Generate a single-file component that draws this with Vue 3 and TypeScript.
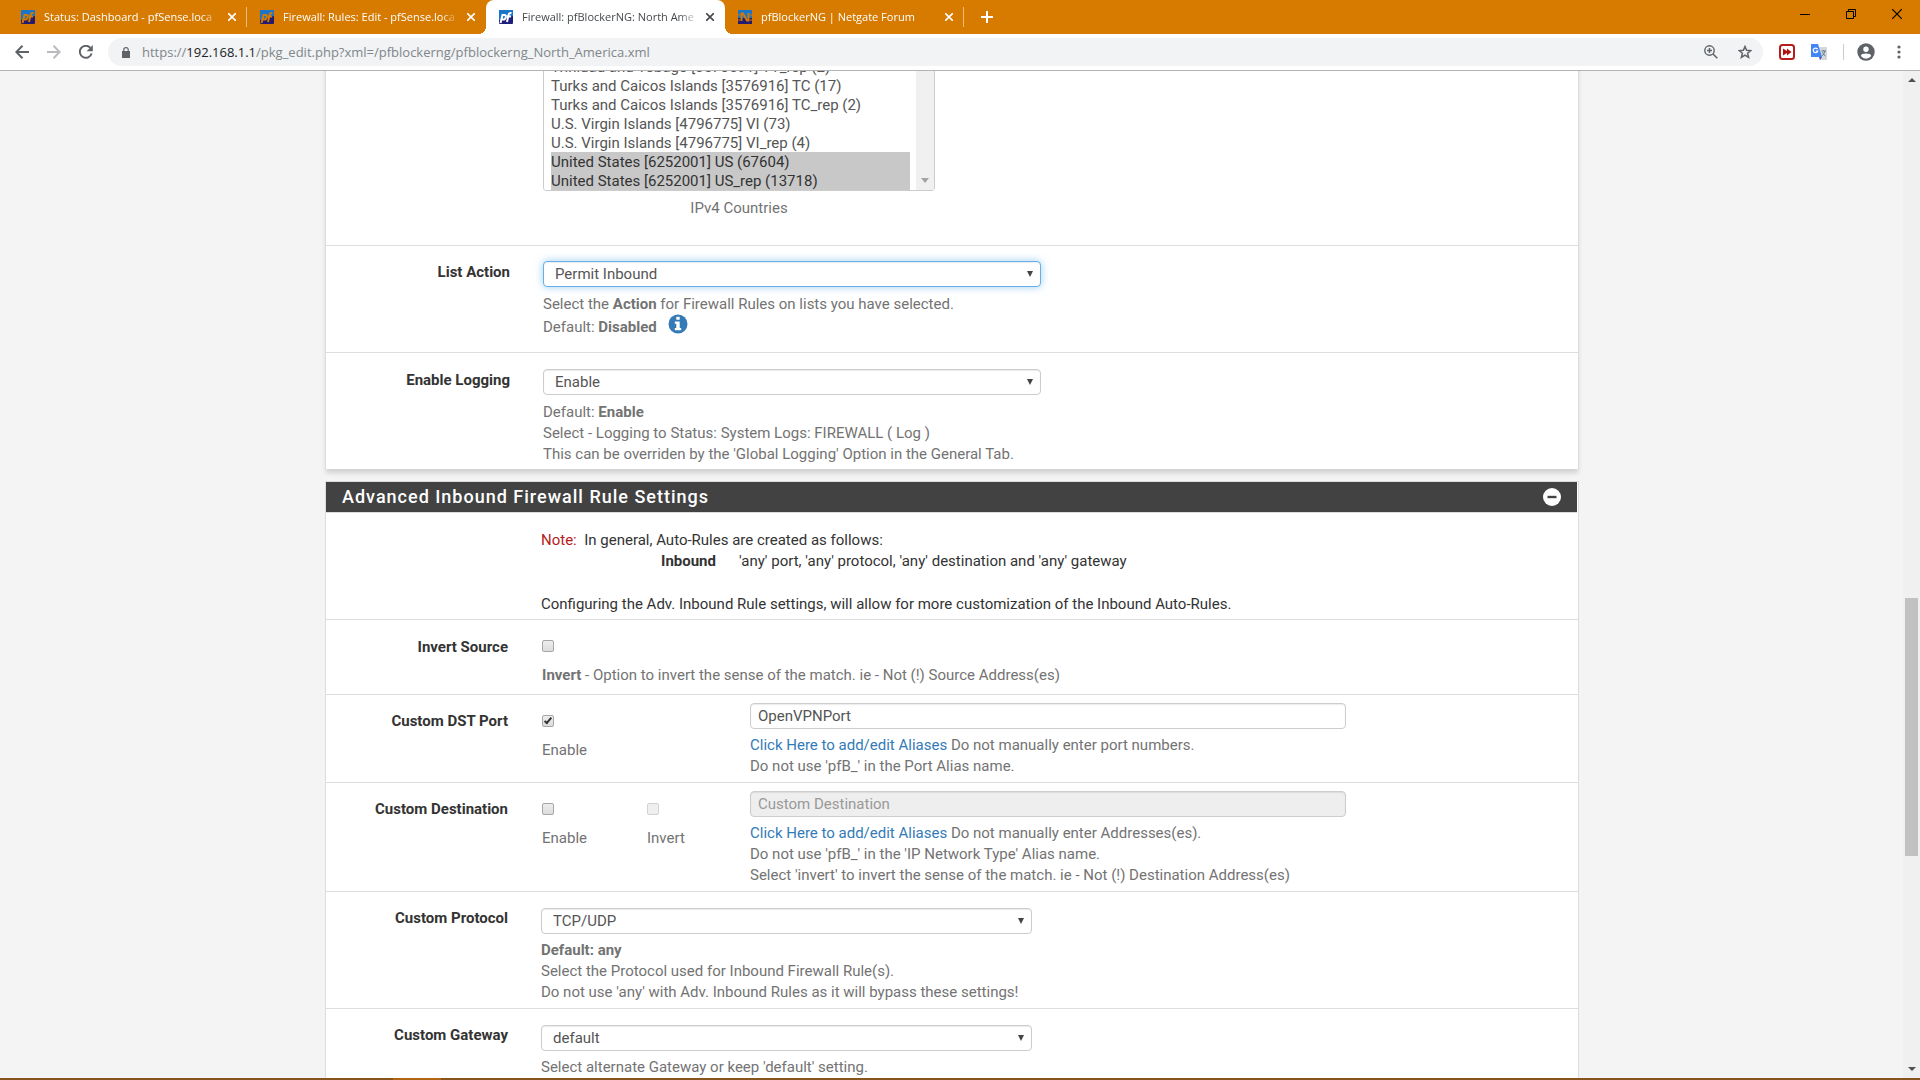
<script setup lang="ts">
import { ref } from 'vue'

interface Tab {
  title: string
  icon: 'pf' | 'netgate'
  active?: boolean
}

const tabs: Tab[] = [
  { title: 'Status: Dashboard - pfSense.loca', icon: 'pf' },
  { title: 'Firewall: Rules: Edit - pfSense.loca', icon: 'pf' },
  { title: 'Firewall: pfBlockerNG: North Ame', icon: 'pf', active: true },
  { title: 'pfBlockerNG | Netgate Forum', icon: 'netgate' },
]

const countries: string[] = [
  'Trinidad and Tobago [3573591] TT_rep (2)',
  'Turks and Caicos Islands [3576916] TC (17)',
  'Turks and Caicos Islands [3576916] TC_rep (2)',
  'U.S. Virgin Islands [4796775] VI (73)',
  'U.S. Virgin Islands [4796775] VI_rep (4)',
  'United States [6252001] US (67604)',
  'United States [6252001] US_rep (13718)',
]

const selectedCountries = ref<string[]>(countries.slice(5))
const listAction = ref('Permit Inbound')
const logging = ref('Enable')
const invertSource = ref(false)
const dstPortOn = ref(true)
const dstPort = ref('OpenVPNPort')
const destinationOn = ref(false)
const destinationInvert = ref(false)
const destination = ref('')
const protocol = ref('TCP/UDP')
const gateway = ref('default')
</script>

<template>
  <div class="window">
    <header class="tab-strip">
      <div class="tabs">
        <div v-for="tab in tabs" :key="tab.title" class="tab" :class="{ active: tab.active }">
          <svg v-if="tab.icon === 'pf'" class="favicon" viewBox="0 0 14 14" aria-hidden="true">
            <rect width="14" height="14" rx="1" :fill="tab.active ? '#1d1d7c' : '#241a70'" />
            <path d="M0 0H14V6L0 10Z" fill="#1b75c9" />
            <g fill="none" :stroke="tab.active ? '#fff' : '#d67a00'" stroke-width="2">
              <path d="M1.500 13L3.500 5H5.500Q7.300 5 6.800 7.300Q6.300 9.600 4.500 9.600H3" />
              <path d="M8 12L9.700 4.500Q10.200 2.600 12.500 3M8 6.500H12" />
            </g>
          </svg>
          <svg v-else class="favicon" viewBox="0 0 14 14" aria-hidden="true">
            <path d="M0 0H14V8H0Z" fill="#1b75c9" />
            <path d="M0 8H14V14H0Z" fill="#241a70" />
            <path d="M3.500 11V3.500H5L9 10.500H10.500V3" fill="none" stroke="#d67a00" stroke-width="2" />
            <path d="M0 5H2M12 5H14M0 10H2M12 10H14" stroke="#d67a00" />
          </svg>
          <span class="tab-title">{{ tab.title }}</span>
          <button class="tab-close" type="button" aria-label="Close tab">
            <svg viewBox="0 0 8 8" width="8" height="8"><path d="M0 0L8 8M8 0L0 8" stroke="currentColor" stroke-width="1.600" /></svg>
          </button>
        </div>
        <button class="new-tab" type="button" aria-label="New tab">
          <svg viewBox="0 0 12 12" width="12" height="12"><path d="M6 0V12M0 6H12" stroke="#fff" stroke-width="2" /></svg>
        </button>
      </div>
      <div class="caption-buttons">
        <button type="button" aria-label="Minimize">
          <svg viewBox="0 0 10 10" width="10" height="10"><path d="M0 5.500H10" stroke="#000" /></svg>
        </button>
        <button type="button" aria-label="Restore">
          <svg viewBox="0 0 10 10" width="10" height="10"><path d="M.5 2.500H7.500V9.500H.5ZM2.500 2.500V.5H9.500V7.500H7.500" fill="none" stroke="#000" /></svg>
        </button>
        <button type="button" aria-label="Close">
          <svg viewBox="0 0 10 10" width="10" height="10"><path d="M0 0L10 10M10 0L0 10" stroke="#000" stroke-width="1.200" /></svg>
        </button>
      </div>
    </header>

    <nav class="toolbar">
      <button class="nav-button" type="button" aria-label="Back">
        <svg viewBox="0 0 14 14" width="14" height="14"><path d="M14 7H1.500M7.500 .8L1.300 7L7.500 13.200" fill="none" stroke="#5f6368" stroke-width="2" /></svg>
      </button>
      <button class="nav-button" type="button" aria-label="Forward">
        <svg viewBox="0 0 14 14" width="14" height="14"><path d="M0 7H12.500M6.500 .8L12.700 7L6.500 13.200" fill="none" stroke="#b9bbbe" stroke-width="2" /></svg>
      </button>
      <button class="nav-button" type="button" aria-label="Reload">
        <svg viewBox="0 0 14 14" width="14" height="14">
          <path d="M12.600 8.500A6 6 0 1 1 11.300 2.800" fill="none" stroke="#5f6368" stroke-width="2" />
          <path d="M13.800 0V6.200H7.600Z" fill="#5f6368" />
        </svg>
      </button>
      <div class="omnibox">
        <svg viewBox="0 0 8 11" width="8" height="11" aria-hidden="true">
          <path d="M0 4H8V11H0Z" fill="#5f6368" />
          <path d="M1.800 4.500V2.600A2.200 2 0 0 1 6.200 2.600V4.500" fill="none" stroke="#5f6368" stroke-width="1.200" />
        </svg>
        <span class="url">https://<b>192.168.1.1</b>/pkg_edit.php?xml=/pfblockerng/pfblockerng_North_America.xml</span>
        <button type="button" aria-label="Zoom">
          <svg viewBox="0 0 14 14" width="14" height="14"><path d="M9 9L13.300 13.300M5.500 3V8M3 5.500H8" stroke="#5f6368" stroke-width="1.500" /><circle cx="5.500" cy="5.500" r="4.700" fill="none" stroke="#5f6368" stroke-width="1.400" /></svg>
        </button>
        <button type="button" aria-label="Bookmark this page">
          <svg viewBox="0 0 14 14" width="14" height="14"><path d="M7 1.500L8.600 5.300L12.800 5.600L9.600 8.300L10.600 12.400L7 10.200L3.400 12.400L4.400 8.300L1.200 5.600L5.400 5.300Z" fill="none" stroke="#5f6368" stroke-width="1.500" /></svg>
        </button>
      </div>
      <div class="extensions">
        <button type="button" aria-label="Fast forward extension">
          <svg viewBox="0 0 16 16" width="16" height="16"><rect x="1" y="1" width="14" height="14" rx="2.500" fill="#fff" stroke="#b81d1d" stroke-width="2" /><path d="M4 4.500L8 7V4.500L12.500 8L8 11.500V9L4 11.500Z" fill="#b01212" /></svg>
        </button>
        <button type="button" aria-label="Translate">
          <svg viewBox="0 0 16 16" width="16" height="16"><path d="M7 3H16V16H9Z" fill="#d5d7da" /><path d="M0 0H7L11 13H0Z" fill="#4285f4" /><path d="M8 13H11L9 16Z" fill="#3a53c5" /><path d="M6.600 5.200A2.300 2.300 0 1 0 6.800 7H4.800" fill="none" stroke="#fff" stroke-width="1.200" /><path d="M10.500 7H15M12.700 6V7M14 7Q13 11 10.800 12M11.500 8.500Q12.500 11 14.500 12" fill="none" stroke="#5f7f86" /></svg>
        </button>
        <span class="divider"></span>
        <button type="button" aria-label="Profile">
          <svg viewBox="0 0 18 18" width="18" height="18"><circle cx="9" cy="9" r="8.700" fill="#5f6368" /><circle cx="9" cy="6.300" r="2.700" fill="#fff" /><path d="M3.800 13Q4.500 10.600 9 10.600T14.200 13Q12 15.700 9 15.700T3.800 13Z" fill="#fff" /></svg>
        </button>
        <button type="button" aria-label="Menu">
          <svg viewBox="0 0 4 14" width="4" height="14"><g fill="#5f6368"><circle cx="2" cy="2" r="1.600" /><circle cx="2" cy="7" r="1.600" /><circle cx="2" cy="12" r="1.600" /></g></svg>
        </button>
      </div>
    </nav>

    <div class="viewport">
      <main class="page">
        <div class="container">
          <section class="panel basic">
            <div class="row countries">
              <div class="label"></div>
              <div class="field">
                <div class="listbox">
                  <select id="countries" v-model="selectedCountries" multiple :size="countries.length">
                    <option v-for="c in countries" :key="c" :value="c">{{ c }}</option>
                  </select>
                  <div class="list-track">
                    <svg viewBox="0 0 8 5" width="8" height="5" aria-hidden="true"><path d="M0 0H8L4 5Z" fill="#a3a3a3" /></svg>
                  </div>
                </div>
                <label class="list-caption" for="countries">IPv4 Countries</label>
              </div>
            </div>

            <div class="row action">
              <label class="label" for="action">List Action</label>
              <div class="field">
                <div class="select focused">
                  <select id="action" v-model="listAction">
                    <option>Disabled</option>
                    <option>Permit Inbound</option>
                  </select>
                </div>
                <p class="help">Select the <b>Action</b> for Firewall Rules on lists you have selected.</p>
                <p class="help with-icon">
                  <span>Default: <b>Disabled</b></span>
                  <svg viewBox="0 0 20 20" width="20" height="20" aria-hidden="true"><circle cx="10" cy="10" r="9.500" fill="#337ab7" /><path d="M8.300 2.800H11.700V5.800H8.300ZM6.800 7.500H11.700V14H13.200V16.300H6.800V14H8.300V9.800H6.800Z" fill="#fff" /></svg>
                </p>
              </div>
            </div>

            <div class="row logging">
              <label class="label" for="logging">Enable Logging</label>
              <div class="field">
                <div class="select">
                  <select id="logging" v-model="logging">
                    <option>Enable</option>
                    <option>Disable</option>
                  </select>
                </div>
                <p class="help">Default: <b>Enable</b><br />Select - Logging to Status: System Logs: FIREWALL ( Log )<br />This can be overriden by the 'Global Logging' Option in the General Tab.</p>
              </div>
            </div>
          </section>

          <section class="panel advanced">
            <div class="panel-heading">
              <h2>Advanced Inbound Firewall Rule Settings</h2>
              <button type="button" aria-label="Collapse section">
                <svg viewBox="0 0 18 18" width="18" height="18"><circle cx="9" cy="9" r="9" fill="#fff" /><path d="M4.500 9H13.500" stroke="#424242" stroke-width="2.400" /></svg>
              </button>
            </div>

            <div class="row note">
              <div class="label"></div>
              <div class="field">
                <p><span class="danger">Note:</span>&nbsp; In general, Auto-Rules are created as follows:</p>
                <dl>
                  <dt>Inbound</dt>
                  <dd>'any' port, 'any' protocol, 'any' destination and 'any' gateway</dd>
                </dl>
                <p>Configuring the Adv. Inbound Rule settings, will allow for more customization of the Inbound Auto-Rules.</p>
              </div>
            </div>

            <div class="row invert">
              <label class="label" for="invert-source">Invert Source</label>
              <div class="field">
                <div class="check">
                  <input id="invert-source" v-model="invertSource" type="checkbox" />
                  <p class="help"><b>Invert</b> - Option to invert the sense of the match. ie - Not (!) Source Address(es)</p>
                </div>
              </div>
            </div>

            <div class="row port">
              <label class="label" for="port">Custom DST Port</label>
              <div class="field split">
                <div class="check">
                  <input id="port-on" v-model="dstPortOn" type="checkbox" />
                  <label class="help" for="port-on">Enable</label>
                </div>
                <div class="entry">
                  <input id="port" v-model="dstPort" type="text" />
                  <p class="help"><a href="#aliases">Click Here to add/edit Aliases</a> Do not manually enter port numbers.<br />Do not use 'pfB_' in the Port Alias name.</p>
                </div>
              </div>
            </div>

            <div class="row destination">
              <label class="label" for="destination">Custom Destination</label>
              <div class="field split">
                <div class="check">
                  <input id="destination-on" v-model="destinationOn" type="checkbox" />
                  <label class="help" for="destination-on">Enable</label>
                </div>
                <div class="check">
                  <input id="destination-invert" v-model="destinationInvert" type="checkbox" disabled />
                  <label class="help" for="destination-invert">Invert</label>
                </div>
                <div class="entry">
                  <input id="destination" v-model="destination" type="text" placeholder="Custom Destination" disabled />
                  <p class="help"><a href="#aliases">Click Here to add/edit Aliases</a> Do not manually enter Addresses(es).<br />Do not use 'pfB_' in the 'IP Network Type' Alias name.<br />Select 'invert' to invert the sense of the match. ie - Not (!) Destination Address(es)</p>
                </div>
              </div>
            </div>

            <div class="row protocol">
              <label class="label" for="protocol">Custom Protocol</label>
              <div class="field">
                <div class="select">
                  <select id="protocol" v-model="protocol">
                    <option>any</option>
                    <option>TCP/UDP</option>
                  </select>
                </div>
                <p class="help"><b>Default: any</b><br />Select the Protocol used for Inbound Firewall Rule(s).<br />Do not use 'any' with Adv. Inbound Rules as it will bypass these settings!</p>
              </div>
            </div>

            <div class="row gateway">
              <label class="label" for="gateway">Custom Gateway</label>
              <div class="field">
                <div class="select">
                  <select id="gateway" v-model="gateway">
                    <option>default</option>
                  </select>
                </div>
                <p class="help">Select alternate Gateway or keep 'default' setting.</p>
              </div>
            </div>
          </section>
        </div>
      </main>
      <div class="scrollbar" aria-hidden="true">
        <svg viewBox="0 0 8 4" width="8" height="4"><path d="M0 4H8L4 0Z" fill="#505050" /></svg>
        <div class="track"><div class="thumb"></div></div>
        <svg viewBox="0 0 8 4" width="8" height="4"><path d="M0 0H8L4 4Z" fill="#505050" /></svg>
      </div>
    </div>
    <footer class="taskbar"><span></span></footer>
  </div>
</template>

<style>
body {
  margin: 0;
  overflow: hidden;
}
</style>

<style scoped>
.window {
  display: flex;
  flex-direction: column;
  height: 100vh;
  overflow: hidden;
  background: #f4f4f4;
  color: #333;
  font: 15px/21px Roboto, sans-serif;
}

.window *,
.window *::before,
.window *::after {
  box-sizing: border-box;
}

button {
  display: grid;
  place-items: center;
  margin: 0;
  padding: 0;
  border: 0;
  background: none;
  color: inherit;
}

svg {
  display: block;
  flex: none;
}

p,
dl,
dd,
h2 {
  margin: 0;
}

/* Browser frame */
.tab-strip {
  display: flex;
  justify-content: space-between;
  flex: none;
  height: 34px;
  background: #d67a00;
  font: 11px/16px "Open Sans", sans-serif;
  color: #fff;
}

.tabs {
  display: flex;
  flex: 1;
  min-width: 0;
  padding-left: 8px;
}

.tab {
  position: relative;
  display: flex;
  align-items: center;
  flex: 0 1 239px;
  min-width: 0;
  padding: 0 10px 0 13px;
}

.tab:not(.active)::before {
  content: "";
  position: absolute;
  top: 7px;
  right: 0;
  width: 1px;
  height: 20px;
  background: #eabd80;
}

.tab:has(+ .active)::before {
  display: none;
}

.tab.active {
  border-radius: 8px 8px 0 0;
  background: #fff;
  color: #45494d;
}

.tab.active::before,
.tab.active::after {
  content: "";
  position: absolute;
  bottom: 0;
  width: 8px;
  height: 8px;
}

.tab.active::before {
  right: 100%;
  background: radial-gradient(circle at 0 0, transparent 8px, #fff 8px);
}

.tab.active::after {
  left: 100%;
  background: radial-gradient(circle at 100% 0, transparent 8px, #fff 8px);
}

.favicon {
  width: 14px;
  height: 14px;
}

.tab-title {
  flex: 1;
  min-width: 0;
  margin: 0 6px 0 9px;
  overflow: hidden;
  white-space: nowrap;
  mask-image: linear-gradient(to left, transparent, #000 20px);
}

.tab-close {
  width: 10px;
  height: 16px;
}

.new-tab {
  width: 46px;
}

.caption-buttons {
  display: flex;
  padding-bottom: 6px;
}

.caption-buttons button {
  width: 46px;
}

.toolbar {
  display: flex;
  align-items: center;
  flex: none;
  height: 37px;
  padding-left: 6px;
  border-bottom: 1px solid #b3b3b3;
  background: #fff;
}

.nav-button {
  width: 32px;
  height: 32px;
}

.omnibox {
  display: flex;
  align-items: center;
  flex: 1;
  min-width: 0;
  height: 28px;
  margin-left: 6px;
  padding: 0 11px 0 14px;
  border-radius: 14px;
  background: #f1f3f4;
  font: 13px/20px "Open Sans", sans-serif;
  color: #80868b;
}

.omnibox button {
  width: 14px;
  margin-left: 20px;
}

.url {
  flex: 1;
  min-width: 0;
  margin-left: 12px;
  overflow: hidden;
  white-space: nowrap;
}

.url b {
  color: #202124;
  font-weight: 400;
}

.extensions {
  display: flex;
  align-items: center;
  gap: 16px;
  padding: 0 19px 0 16px;
}

.divider {
  width: 1px;
  height: 16px;
  background: #ccc;
}

.extensions .divider + button {
  margin: 0 6px 0 -3px;
}

/* Page */
.viewport {
  display: flex;
  flex: 1;
  min-height: 0;
}

.page {
  flex: 1;
  min-width: 0;
  overflow: hidden;
  padding-left: 1px;
}

.container {
  max-width: 1254px;
  margin: -14px auto 0;
}

.panel {
  border: 1px solid #dcdcdc;
  background: #fff;
}

.basic {
  border-top: 0;
  border-bottom: 0;
  margin-bottom: 12px;
  box-shadow: 0 5px 5px -1px rgba(0, 0, 0, 0.15);
}

.row {
  display: flex;
}

.row + .row {
  border-top: 1px solid #dedede;
}

.label {
  flex: none;
  width: 184px;
  font-weight: 700;
  text-align: right;
}

.field {
  flex: 1;
  min-width: 0;
  margin-left: 33px;
}

.advanced .label {
  width: 182px;
}

.help {
  display: block;
  color: #737373;
}

.countries {
  padding-bottom: 26px;
}

.listbox {
  display: flex;
  max-width: 392px;
  height: 134px;
  border: 1px solid #ccc;
  border-top: 0;
  border-radius: 0 0 4px 4px;
}

.listbox select {
  flex: 1;
  min-width: 0;
  height: 133px;
  margin: 0;
  padding: 0 6px 0 7px;
  border: 0;
  outline: 0;
  overflow: hidden;
  background: #fff;
  font: 15px/19px Roboto, sans-serif;
  color: #555;
}

.listbox option {
  height: 19px;
  min-height: 19px;
  padding: 1px 0 0;
  line-height: 18px;
}

.listbox option:checked {
  background: #c8c8c8 linear-gradient(#c8c8c8, #c8c8c8);
  color: #333;
}

.list-track {
  display: flex;
  align-items: flex-end;
  justify-content: center;
  width: 18px;
  padding-bottom: 7px;
  background: #f0f0f0;
}

.list-caption {
  display: block;
  max-width: 392px;
  margin-top: 7px;
  color: #737373;
  text-align: center;
}

.select {
  position: relative;
  max-width: 498px;
  margin-bottom: 7px;
}

.advanced .select {
  max-width: 491px;
  margin-bottom: 6px;
}

.select::after {
  content: "";
  position: absolute;
  top: 10px;
  right: 8px;
  width: 6px;
  height: 6px;
  background: #444;
  clip-path: polygon(0 0, 100% 0, 50% 100%);
  pointer-events: none;
}

.select select,
.entry input {
  display: block;
  width: 100%;
  height: 26px;
  margin: 0;
  padding: 1px 11px 0;
  border: 1px solid #ccc;
  border-radius: 4px;
  outline: 0;
  appearance: none;
  background: #fff;
  box-shadow: inset 0 1px 1px rgba(0, 0, 0, 0.08);
  color: #555;
  font: 15px/21px Roboto, sans-serif;
}

.select.focused select {
  border-color: #66afe9;
  box-shadow: inset 0 1px 1px rgba(0, 0, 0, 0.08), 0 0 8px rgba(102, 175, 233, 0.6);
}

.action {
  padding: 15px 0 12px;
}

.action .label,
.logging .label {
  margin-top: 1px;
}

.with-icon {
  display: flex;
  align-items: center;
  gap: 11px;
  height: 25px;
}

.with-icon svg {
  margin-bottom: 8px;
}

.logging {
  padding: 16px 0 4px;
}

.panel-heading {
  display: flex;
  align-items: center;
  justify-content: space-between;
  height: 31px;
  margin-right: 1px;
  padding: 0 16px;
  border-bottom: 1px solid #dcdcdc;
  background: #424242;
  color: #fff;
}

.panel-heading h2 {
  font-size: 18px;
  font-weight: 500;
  line-height: 24px;
  letter-spacing: 1px;
}

.note {
  padding: 17px 0 4px;
}

.note p:last-child {
  margin-top: 22px;
}

.danger {
  color: #b71c1c;
}

dl {
  display: flex;
  gap: 23px;
  padding-left: 120px;
}

dt {
  font-weight: 700;
}

.invert {
  padding: 17px 0 8px;
}

.check {
  display: flex;
  flex-direction: column;
  gap: 13px;
  padding: 3px 0 0 1px;
}

.check input {
  display: grid;
  place-items: center;
  width: 12px;
  height: 12px;
  margin: 0;
  border: 1px solid #a6a6a6;
  border-radius: 2px;
  appearance: none;
  background: linear-gradient(#ededed, #dcdcdc);
}

.check input:disabled {
  border-color: #d2d2d2;
  background: #efefef;
}

.check input:checked::after {
  content: "";
  width: 4px;
  height: 8px;
  margin-bottom: 2px;
  border: solid #333;
  border-width: 0 2px 2px 0;
  transform: rotate(40deg);
}

.port,
.destination {
  padding: 8px 0 5px;
}

.port .label,
.destination .label {
  margin-top: 8px;
}

.split {
  display: flex;
}

.split .check {
  flex: none;
  width: 105px;
  margin-top: 9px;
}

.port .check {
  width: 209px;
}

.split .check + .check {
  width: 104px;
}

.entry {
  flex: 0 1 596px;
  min-width: 0;
}

.entry input {
  margin-bottom: 6px;
  padding: 0 7px;
}

.entry input:disabled {
  background: #eee;
}

.entry input::placeholder {
  color: #999;
  opacity: 1;
}

a {
  color: #337ab7;
  text-decoration: none;
}

.protocol,
.gateway {
  padding: 16px 0 5px;
}

.scrollbar {
  display: flex;
  flex-direction: column;
  align-items: center;
  flex: none;
  width: 17px;
  padding: 7px 0;
  background: #f0f0f0;
}

.track {
  flex: 1;
  align-self: stretch;
  display: flex;
  flex-direction: column;
  padding: 0 2px;
}

.track::before {
  content: "";
  flex: 514 1 0;
}

.track::after {
  content: "";
  flex: 210 1 0;
}

.thumb {
  flex: 258 1 0;
  background: #c1c1c1;
}

.taskbar {
  display: flex;
  flex: none;
  height: 2px;
  padding-left: 393px;
  background: #85551d;
}

.taskbar span {
  width: 48px;
  background: #b06512;
}
</style>
